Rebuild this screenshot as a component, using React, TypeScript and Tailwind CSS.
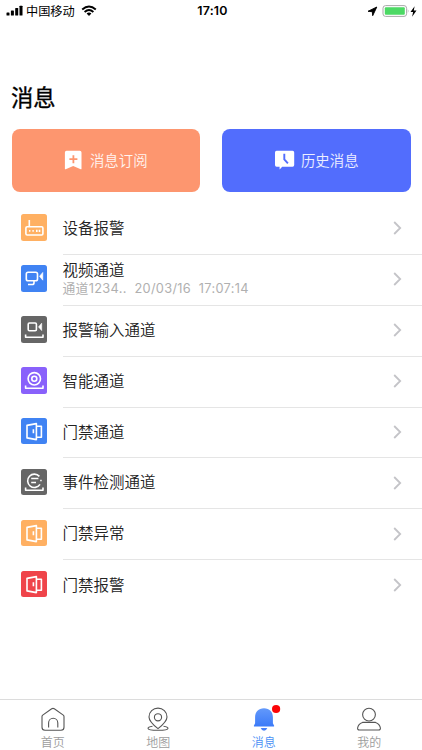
import type { ReactNode } from 'react';

type IconName = 'device' | 'video' | 'input' | 'smart' | 'door' | 'event';

interface Channel {
  title: string;
  icon: IconName;
  color: string;
  detail?: string;
}

const channels: Channel[] = [
  { title: '设备报警', icon: 'device', color: 'bg-[#ffb062]' },
  { title: '视频通道', icon: 'video', color: 'bg-[#4083f3]', detail: '通道1234..  20/03/16  17:07:14' },
  { title: '报警输入通道', icon: 'input', color: 'bg-[#666666]' },
  { title: '智能通道', icon: 'smart', color: 'bg-[#8961fb]' },
  { title: '门禁通道', icon: 'door', color: 'bg-[#4083f3]' },
  { title: '事件检测通道', icon: 'event', color: 'bg-[#666666]' },
  { title: '门禁异常', icon: 'door', color: 'bg-[#ffb062]' },
  { title: '门禁报警', icon: 'door', color: 'bg-[#ef444a]' },
];

const tray = <path d="M4.6 18.4v2.9h17.4v-2.9" />;

const glyphs: Record<IconName, ReactNode> = {
  device: (
    <>
      <rect x="4.9" y="12.8" width="17" height="8.2" rx="1.2" />
      <path d="M8.3 6v6.5M8 16.9h1.4M11.4 16.9h1.4M15.8 15.7v2.3M18.5 15.7v2.3" />
    </>
  ),
  video: (
    <>
      <rect x="5.3" y="7.2" width="11.2" height="8.6" rx="1.8" />
      <path d="M13 15.8v1.9q0 1.8-1.8 1.8H7" />
      <path d="M18.5 11.3l3.3-3.9v7.8z" fill="white" strokeWidth="0.6" />
    </>
  ),
  input: (
    <>
      <rect x="7.2" y="7" width="8.2" height="7.8" rx="1.2" />
      <path d="M17.5 10.9l3.2-3.7v7.4z" fill="white" strokeWidth="0.6" />
      {tray}
    </>
  ),
  smart: (
    <>
      <circle cx="13.3" cy="11.8" r="6.2" />
      <circle cx="13.3" cy="11.8" r="2.5" />
      {tray}
    </>
  ),
  door: (
    <>
      <path d="M6 7.4l9.4-1.8v16L6 19.9z" />
      <path d="M15.4 8.3h5v10.9h-5M12.4 11.3v4" />
    </>
  ),
  event: (
    <>
      <path d="M18.4 7.4a6.7 6.7 0 1 0 .6 8M10.2 9.5h7.2M10.2 13.5h4.8M19.2 11.5h1.5" />
      {tray}
    </>
  ),
};

function StatusBar() {
  return (
    <div className="flex h-[22px] shrink-0 items-center justify-between pl-[6px] pr-[5px] text-black">
      <div className="flex w-[150px] items-center">
        <svg width="18" height="12" viewBox="0 0 18 12" fill="black">
          <rect x="0.5" y="7.5" width="3" height="3" rx="0.6" />
          <rect x="4.9" y="5.5" width="3" height="5" rx="0.6" />
          <rect x="9.2" y="3" width="3" height="7.5" rx="0.6" />
          <rect x="13.5" y="0.7" width="3" height="9.8" rx="0.6" />
        </svg>
        <span className="ml-[2px] text-[12.2px] leading-none">中国移动</span>
        <svg className="ml-[6px]" width="16" height="12" viewBox="0 0 16 12" fill="none" stroke="black" strokeWidth="1.9">
          <path d="M1.2 4.5Q8-1.6 14.8 4.5M3.6 7Q8 3.2 12.4 7" />
          <path d="M8 10.9L5.6 8.6Q8 6.6 10.4 8.6z" fill="black" stroke="none" />
        </svg>
      </div>
      <span className="pl-[2px] pt-px font-['Inter'] text-[12.4px] font-semibold leading-none tracking-[0.2px]">17:10</span>
      <div className="flex w-[150px] items-center justify-end">
        <svg width="11" height="11" viewBox="0 0 11 11">
          <path d="M1 5.3L9.8 1 5.7 9.7 5.3 5.7z" stroke="black" strokeWidth="0.9" />
        </svg>
        <svg className="ml-[4px]" width="28" height="12" viewBox="0 0 28 12">
          <rect x="1" y=".6" width="23.6" height="10.8" rx="2.6" fill="white" stroke="#a9a9a9" />
          <rect x="2.8" y="2.3" width="20" height="7.4" rx="1" fill="#4cd964" />
          <path d="M25.8 4q1.5 2 0 4z" fill="#a9a9a9" />
        </svg>
        <svg width="7" height="11" viewBox="0 0 7 11">
          <path d="M4.6.3L.5 6h2.6L2.1 10.7 6.5 4.6H3.8z" />
        </svg>
      </div>
    </div>
  );
}

function ChannelRow({ channel, last }: { channel: Channel; last: boolean }) {
  return (
    <li className="flex h-[50.9px] pl-[20.5px]">
      <div className={`mt-[10.4px] size-[26.5px] shrink-0 rounded-[2.5px] ${channel.color}`}>
        <svg
          className="size-full"
          viewBox="0 0 26.5 26.5"
          fill="none"
          stroke="white"
          strokeWidth="1.6"
          strokeLinejoin="round"
        >
          {glyphs[channel.icon]}
        </svg>
      </div>
      <div className={`ml-[15.5px] flex flex-1 items-center pr-[20px] ${last ? '' : 'border-b border-[#e5e5e5]'}`}>
        <div className={`flex-1 ${channel.detail ? 'pb-px' : 'pb-[3px]'}`}>
          <div className="text-[15.5px] font-[350] leading-[19px] text-[#222222]">{channel.title}</div>
          {channel.detail && (
            <div className="whitespace-pre font-['Inter','Noto_Sans_CJK_SC',sans-serif] text-[12.8px] leading-[19px] tracking-[0.3px] text-[#b0b0b0]">
              {channel.detail}
            </div>
          )}
        </div>
        <svg className="mb-[1.5px]" width="9" height="14" viewBox="0 0 9 14" fill="none" stroke="#c4c4c8" strokeWidth="1.8">
          <path d="M1.2 1l6 6-6 6" />
        </svg>
      </div>
    </li>
  );
}

function Tab({ label, active, children }: { label: string; active?: boolean; children: ReactNode }) {
  return (
    <div className="flex flex-1 flex-col items-center pt-[7px]">
      <svg className="overflow-visible" width="26" height="26" viewBox="0 0 26 26" fill="none" stroke="#555555" strokeWidth="1.1">
        {children}
      </svg>
      <span className={`mt-[2px] text-[12px] font-[350] leading-[14px] ${active ? 'text-[#4a90f5]' : 'text-[#9c9c9c]'}`}>
        {label}
      </span>
    </div>
  );
}

export default function App() {
  return (
    <div className="flex h-[750px] w-full flex-col overflow-hidden bg-white font-['Noto_Sans_CJK_SC',sans-serif]">
      <StatusBar />
      <h1 className="mt-[57.5px] pl-[11px] text-[22.3px] font-normal leading-[32px] text-black [-webkit-text-stroke:0.35px_black]">
        消息
      </h1>

      <div className="mt-[17px] flex gap-[22px] px-[11.5px]">
        <button className="flex h-[63px] flex-1 items-center justify-center rounded-[8px] bg-[#fd966f] text-[14.4px] font-[350] text-white/90">
          <svg className="mr-[7px]" width="19" height="20" viewBox="0 0 19 20">
            <path d="M2.5.8h13.3q1.7 0 1.7 1.7v16.2q0 .9-.8.5L9.2 16l-7.5 3.2q-.8.4-.8-.5V2.5Q.9.8 2.5.8z" fill="white" />
            <path d="M9.4 5.2v8M5.4 9.2h8" stroke="#fd966f" strokeWidth="1.8" />
          </svg>
          消息订阅
        </button>
        <button className="flex h-[63px] flex-1 items-center justify-center rounded-[8px] bg-[#526dfd] text-[14.4px] font-[350] text-white/90">
          <svg className="mr-[6px]" width="21" height="20" viewBox="0 0 21 20">
            <path d="M2.6.8h16q1.6 0 1.6 1.6v12.7q0 1.6-1.6 1.6H8.2l-2.6 2.9v-2.9h-3Q1 16.7 1 15.1V2.4Q1 .8 2.6.8z" fill="white" />
            <path d="M10.3 3.7v5.6l3.6 4" fill="none" stroke="#526dfd" strokeWidth="1.9" />
          </svg>
          历史消息
        </button>
      </div>

      <ul className="mt-[12.5px] flex-1">
        {channels.map((channel, i) => (
          <ChannelRow key={channel.title} channel={channel} last={i === channels.length - 1} />
        ))}
      </ul>

      <nav className="flex h-[51px] shrink-0 border-t border-[#dcdcdc]">
        <Tab label="首页">
          <path d="M2 9.4Q2 8.6 2.7 8.1L11.7 1.8q1.3-.9 2.6 0L23.3 8.1q.7.5.7 1.3V20.3q0 3-3 3H5q-3 0-3-3z" />
          <path d="M8.6 20.4v-4.5a4.6 4.6 0 0 1 9.2 0v4.5" />
        </Tab>
        <Tab label="地图">
          <path d="M13 21.6Q4 14.5 4 9.9a9 8.8 0 0 1 18 0Q22 14.5 13 21.6z" />
          <circle cx="13" cy="10.3" r="3.6" />
          <path d="M7.5 19.2Q3 20 3 21.2C3 24 23 24 23 21.2Q23 20 18.5 19.2" />
        </Tab>
        <Tab label="消息" active>
          <defs>
            <linearGradient id="bell" x1="0" y1="0" x2="0" y2="1">
              <stop offset="0" stopColor="#6399fb" />
              <stop offset="1" stopColor="#3b7af8" />
            </linearGradient>
          </defs>
          <path d="M13 1.2C7.5 1.2 4.1 4.8 4.1 10v6.3l-1.1 2.2q-.6 1.1.7 1.1h18.6q1.3 0 .7-1.1l-1.1-2.2V10c0-5.2-3.4-8.8-8.9-8.8z" fill="url(#bell)" stroke="none" />
          <path d="M9.7 21h6.6q-1 2.7-3.3 2.7T9.7 21z" fill="#4680f9" stroke="none" />
          <circle cx="25.1" cy="2" r="4.1" fill="#fb0407" stroke="none" />
        </Tab>
        <Tab label="我的">
          <circle cx="13" cy="7.6" r="6.4" />
          <path d="M6.5 15.4h13q4.3 1.4 4.9 5.6.2 2-1.9 2h-19q-2.1 0-1.9-2 .6-4.2 4.9-5.6z" />
        </Tab>
      </nav>
    </div>
  );
}
